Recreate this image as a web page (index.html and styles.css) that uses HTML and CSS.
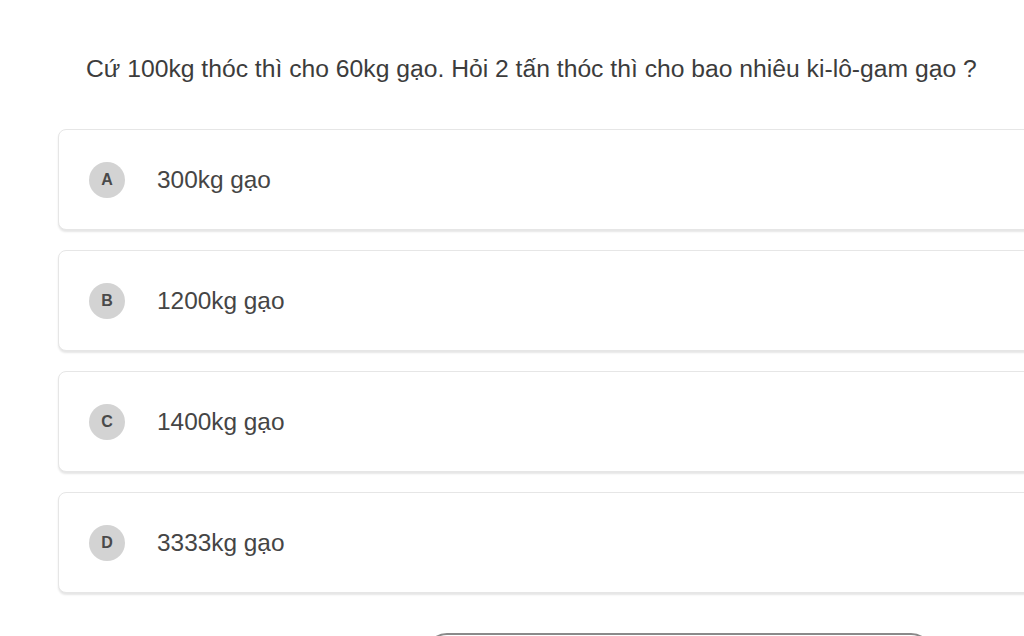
FILE: index.html
```html
<!DOCTYPE html>
<html lang="vi">
<head>
<meta charset="utf-8">
<title>Câu hỏi</title>
<link rel="stylesheet" href="styles.css">
</head>
<body>
<main class="quiz">
  <p class="question">Cứ 100kg thóc thì cho 60kg gạo. Hỏi 2 tấn thóc thì cho bao nhiêu ki-lô-gam gạo ?</p>
  <ul class="options">
    <li class="option"><span class="badge">A</span><span class="answer">300kg gạo</span></li>
    <li class="option"><span class="badge">B</span><span class="answer">1200kg gạo</span></li>
    <li class="option"><span class="badge">C</span><span class="answer">1400kg gạo</span></li>
    <li class="option"><span class="badge">D</span><span class="answer">3333kg gạo</span></li>
  </ul>
  <div class="actions"><button class="submit" type="button" aria-label="Kiểm tra"></button></div>
</main>
</body>
</html>
```
FILE: styles.css
```css
html, body {
  margin: 0;
  padding: 0;
  background: #ffffff;
  overflow: hidden;
  height: 636px;
}
body {
  font-family: "Liberation Sans", Arial, sans-serif;
  color: #444;
}
.quiz {
  padding: 54px 0 0 58px;
  width: 1000px;
}
.question {
  margin: 0 0 45px 28px;
  font-size: 24.7px;
  line-height: 30px;
  color: #3c3c3c;
  white-space: nowrap;
}
.options {
  list-style: none;
  margin: 0;
  padding: 0;
  display: flex;
  flex-direction: column;
  gap: 20px;
}
.option {
  height: 101px;
  box-sizing: border-box;
  border: 1px solid #e6e6e6;
  border-radius: 8px;
  box-shadow: 0 2px 2px rgba(0,0,0,0.10);
  display: flex;
  align-items: center;
  padding-left: 30px;
  gap: 32px;
  background: #fff;
}
.badge {
  width: 36px;
  height: 36px;
  border-radius: 50%;
  background: #d3d3d3;
  color: #4a4a4a;
  font-weight: bold;
  font-size: 16px;
  display: flex;
  align-items: center;
  justify-content: center;
  flex: none;
}
.answer {
  font-size: 24.4px;
  color: #454545;
}
.actions {
  display: flex;
  padding-left: 367px;
  margin-top: 40px;
}
.submit {
  width: 508px;
  height: 50px;
  border: 2px solid #8a8a8a;
  border-radius: 22px;
  background: #fff;
}
```
